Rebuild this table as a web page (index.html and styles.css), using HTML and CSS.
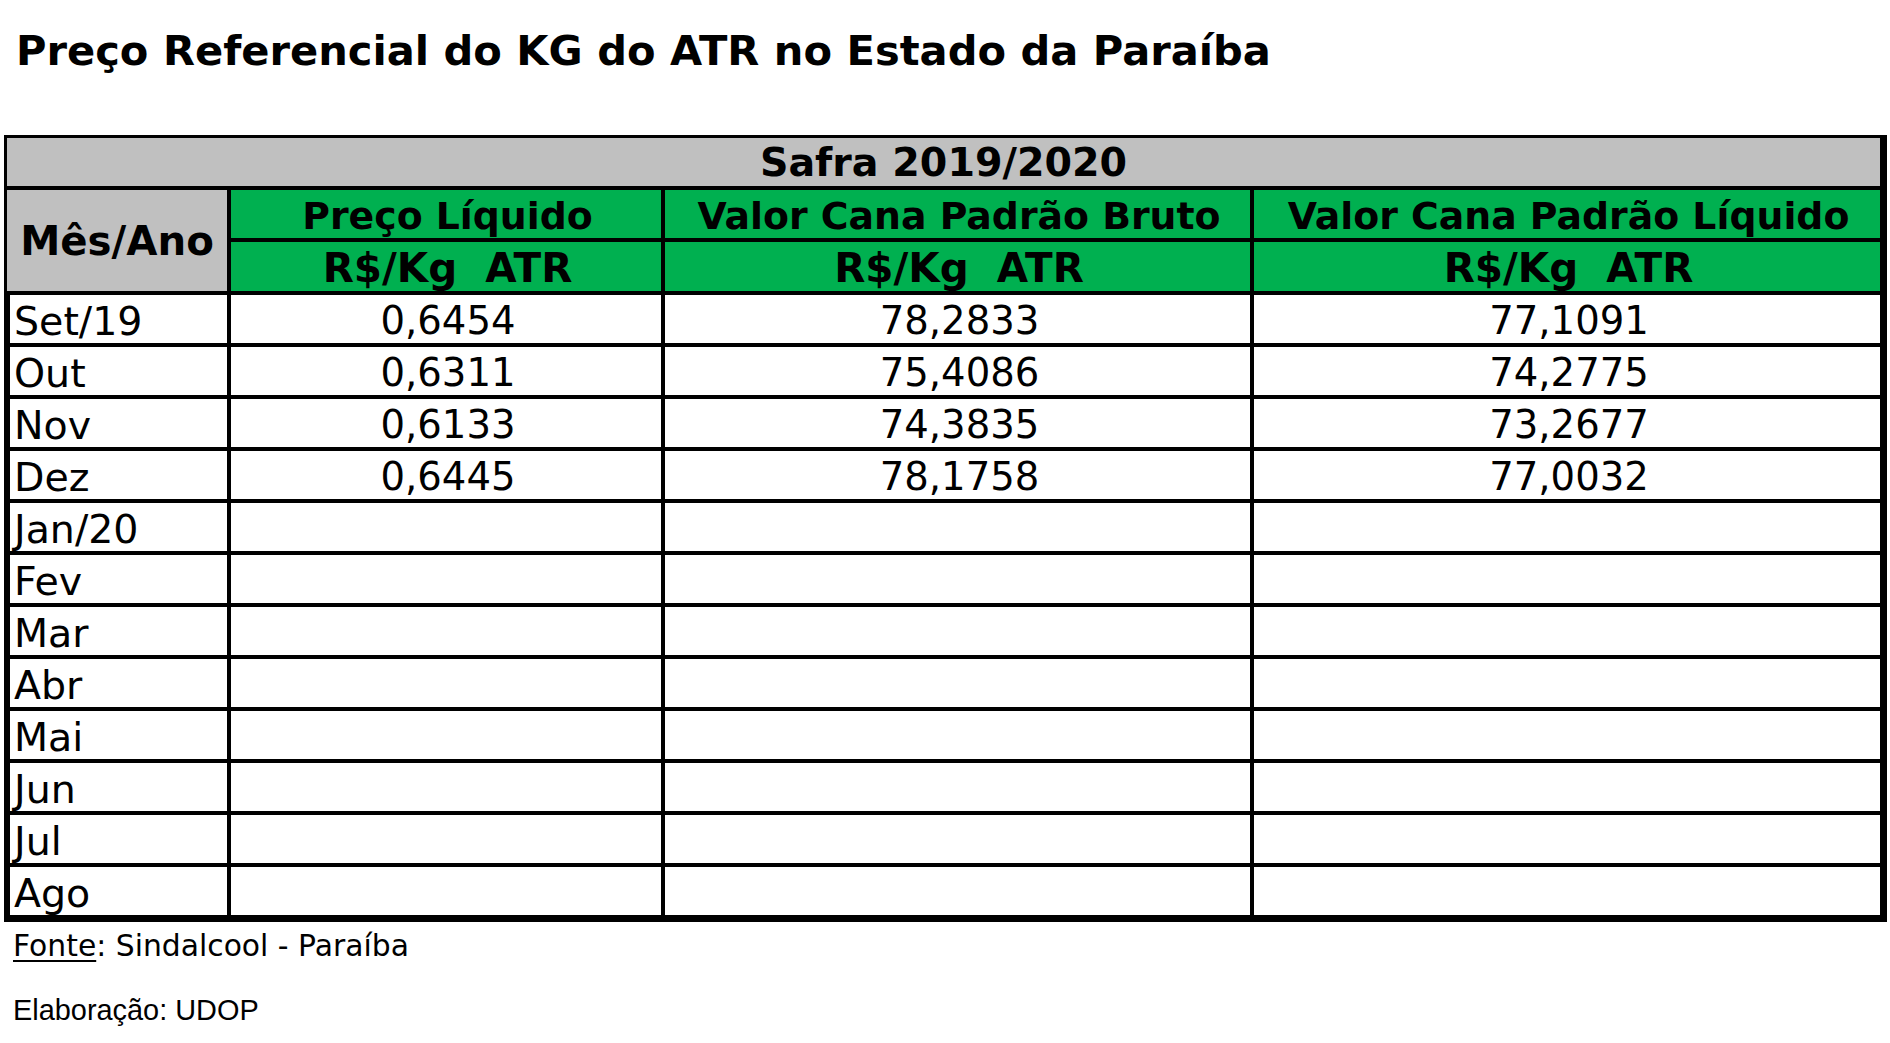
FILE: index.html
```html
<!DOCTYPE html>
<html lang="pt-BR">
<head>
<meta charset="utf-8">
<title>Preço Referencial do KG do ATR no Estado da Paraíba</title>
<link rel="stylesheet" href="styles.css">
</head>
<body>
<h1 class="title">Preço Referencial do KG do ATR no Estado da Paraíba</h1>
<div class="sheet">
  <div class="cell safra">Safra 2019/2020</div>
  <div class="cell month-head">Mês/Ano</div>
  <div class="cell green">Preço Líquido</div>
  <div class="cell green">Valor Cana Padrão Bruto</div>
  <div class="cell green">Valor Cana Padrão Líquido</div>
  <div class="cell green unit">R$/Kg  ATR</div>
  <div class="cell green unit">R$/Kg  ATR</div>
  <div class="cell green unit">R$/Kg  ATR</div>

  <div class="cell month">Set/19</div><div class="cell num">0,6454</div><div class="cell num">78,2833</div><div class="cell num">77,1091</div>
  <div class="cell month">Out</div><div class="cell num">0,6311</div><div class="cell num">75,4086</div><div class="cell num">74,2775</div>
  <div class="cell month">Nov</div><div class="cell num">0,6133</div><div class="cell num">74,3835</div><div class="cell num">73,2677</div>
  <div class="cell month">Dez</div><div class="cell num">0,6445</div><div class="cell num">78,1758</div><div class="cell num">77,0032</div>
  <div class="cell month">Jan/20</div><div class="cell num"></div><div class="cell num"></div><div class="cell num"></div>
  <div class="cell month">Fev</div><div class="cell num"></div><div class="cell num"></div><div class="cell num"></div>
  <div class="cell month">Mar</div><div class="cell num"></div><div class="cell num"></div><div class="cell num"></div>
  <div class="cell month">Abr</div><div class="cell num"></div><div class="cell num"></div><div class="cell num"></div>
  <div class="cell month">Mai</div><div class="cell num"></div><div class="cell num"></div><div class="cell num"></div>
  <div class="cell month">Jun</div><div class="cell num"></div><div class="cell num"></div><div class="cell num"></div>
  <div class="cell month">Jul</div><div class="cell num"></div><div class="cell num"></div><div class="cell num"></div>
  <div class="cell month">Ago</div><div class="cell num"></div><div class="cell num"></div><div class="cell num"></div>
</div>
<p class="source"><span class="u">Fonte</span>: Sindalcool - Paraíba</p>
<p class="credit">Elaboração: UDOP</p>
</body>
</html>
```

FILE: styles.css
```css
html, body {
  margin: 0;
  padding: 0;
  background: #ffffff;
}

body {
  width: 1890px;
  height: 1043px;
  overflow: hidden;
  font-family: "DejaVu Sans", Verdana, sans-serif;
  color: #000;
}

.title {
  margin: 0 0 59px 0;
  padding: 26px 0 0 16px;
  height: 50px;
  line-height: 50px;
  font-size: 41.6px;
  font-weight: bold;
  white-space: nowrap;
}

.sheet {
  margin-left: 4px;
  width: 1883px;
  box-sizing: border-box;
  display: grid;
  grid-template-columns: 220px 430px 585px 626px;
  grid-template-rows: 48px 48px 49px repeat(12, 48px);
  gap: 4px;
  padding: 3px 7px 7px 3px;
  background: #000;
}

.cell {
  background: #fff;
  display: flex;
  align-items: center;
  justify-content: center;
  white-space: pre;
  overflow: hidden;
}

.safra {
  grid-column: 1 / 5;
  background: #c0c0c0;
  font-weight: bold;
  font-size: 39.6px;
}

.month-head {
  grid-row: 2 / 4;
  background: #c0c0c0;
  font-weight: bold;
  font-size: 40.3px;
  padding-top: 2px;
}

.green {
  background: #00b050;
  font-weight: bold;
  font-size: 37.8px;
  padding-top: 4px;
  padding-left: 3px;
}

.green.unit {
  font-size: 40.5px;
  padding-top: 2px;
}

.month {
  justify-content: flex-start;
  padding-left: 7px;
  box-shadow: inset 3px 0 0 #000;
  font-size: 39.5px;
  padding-top: 3px;
}

.num {
  font-size: 38.6px;
  padding-top: 3px;
  padding-left: 4px;
}

.source {
  margin: 7px 0 0 13px;
  font-size: 29.8px;
  line-height: 34px;
}

.source .u {
  text-decoration: underline;
  text-decoration-thickness: 2px;
  text-underline-offset: 4px;
}

.credit {
  margin: 30px 0 0 13px;
  font-family: "Liberation Sans", Arial, sans-serif;
  font-size: 28.9px;
  line-height: 34px;
}
```
